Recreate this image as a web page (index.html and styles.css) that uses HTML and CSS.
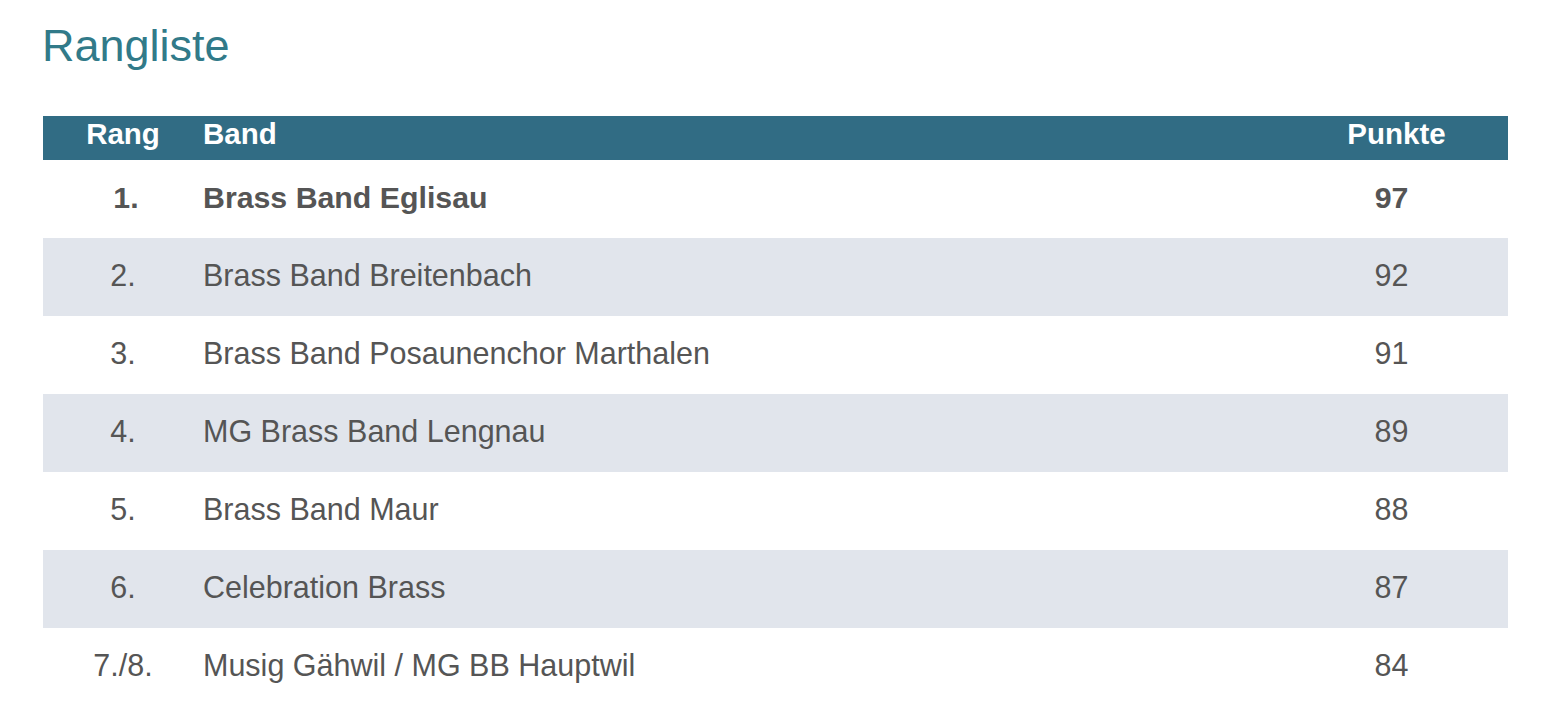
FILE: index.html
```html
<!DOCTYPE html>
<html lang="de">
<head>
<meta charset="utf-8">
<title>Rangliste</title>
<link rel="stylesheet" href="styles.css">
</head>
<body>
<main class="page">
  <h1 class="title">Rangliste</h1>
  <table class="ranking">
    <thead>
      <tr>
        <th class="col-rank">Rang</th>
        <th class="col-band">Band</th>
        <th class="col-points">Punkte</th>
      </tr>
    </thead>
    <tbody>
      <tr class="winner">
        <td class="col-rank">1.</td>
        <td class="col-band">Brass Band Eglisau</td>
        <td class="col-points">97</td>
      </tr>
      <tr>
        <td class="col-rank">2.</td>
        <td class="col-band">Brass Band Breitenbach</td>
        <td class="col-points">92</td>
      </tr>
      <tr>
        <td class="col-rank">3.</td>
        <td class="col-band">Brass Band Posaunenchor Marthalen</td>
        <td class="col-points">91</td>
      </tr>
      <tr>
        <td class="col-rank">4.</td>
        <td class="col-band">MG Brass Band Lengnau</td>
        <td class="col-points">89</td>
      </tr>
      <tr>
        <td class="col-rank">5.</td>
        <td class="col-band">Brass Band Maur</td>
        <td class="col-points">88</td>
      </tr>
      <tr>
        <td class="col-rank">6.</td>
        <td class="col-band">Celebration Brass</td>
        <td class="col-points">87</td>
      </tr>
      <tr>
        <td class="col-rank">7./8.</td>
        <td class="col-band">Musig Gähwil / MG BB Hauptwil</td>
        <td class="col-points">84</td>
      </tr>
    </tbody>
  </table>
</main>
</body>
</html>
```
FILE: styles.css
```css
html, body {
  margin: 0;
  padding: 0;
  background: #ffffff;
}

body {
  font-family: "Liberation Sans", Arial, Helvetica, sans-serif;
  color: #555555;
}

.page {
  padding: 0 46px 0 43px;
}

.title {
  margin: 24px 0 48px -1px;
  font-size: 45px;
  line-height: 44px;
  font-weight: normal;
  color: #317a89;
}

.ranking {
  width: 1465px;
  border-collapse: collapse;
  border-spacing: 0;
  table-layout: fixed;
}

.ranking th {
  height: 36px;
  line-height: 36px;
  padding: 0 0 8px 0;
  background: #316c84;
  color: #ffffff;
  font-size: 29.5px;
  font-weight: bold;
  text-align: left;
}

.ranking td {
  height: 75px;
  line-height: 75px;
  padding: 0 0 3px 0;
  font-size: 30.5px;
  white-space: nowrap;
}

.ranking tbody tr:nth-child(even) td {
  background: #e1e5ec;
}

.ranking .col-rank {
  width: 160px;
  text-align: center;
}

.ranking .col-band {
  text-align: left;
}

.ranking .col-points {
  width: 223px;
  text-align: center;
}

.ranking td.col-points {
  padding-right: 10px;
}

.winner td {
  font-weight: bold;
  font-size: 30.3px;
}

.winner td.col-rank {
  padding-left: 6px;
}
```
